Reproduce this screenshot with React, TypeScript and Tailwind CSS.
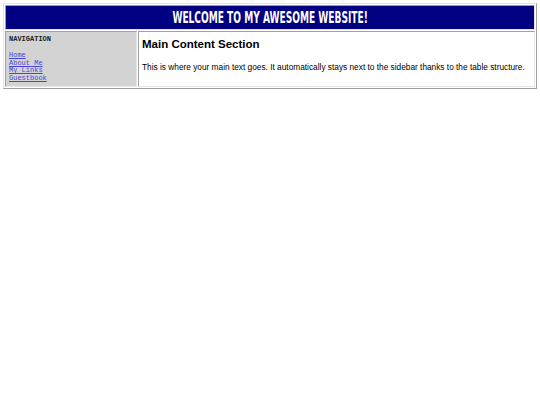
import React from "react";

const links = ["Home", "About Me", "My Links", "Guestbook"];

export default function App() {
  return (
    <div className="min-h-screen bg-white p-[3px]">
      <div className="flex flex-col gap-[1px] border border-t-[#e4e4e4] border-l-[#e4e4e4] border-r-[#a0a0a0] border-b-[#a0a0a0] p-[1px]">
        <div className="flex h-[25px] items-center justify-center overflow-hidden border border-t-[#a0a0a0] border-l-[#a0a0a0] border-r-[#e4e4e4] border-b-[#e4e4e4] bg-[#000080]">
          <h1
            className="scale-x-[0.63] whitespace-nowrap text-[16px] font-bold uppercase leading-none text-white"
            style={{ fontFamily: '"DejaVu Sans Condensed", "DejaVu Sans", sans-serif', fontStretch: "condensed" }}
          >
            Welcome to my Awesome Website!
          </h1>
        </div>
        <div className="flex gap-[1px]">
          <div className="w-[132px] shrink-0 border border-t-[#a0a0a0] border-l-[#a0a0a0] border-r-[#e4e4e4] border-b-[#e4e4e4] bg-[#d3d3d3] px-[3px] pt-[3px] pb-[3px] font-['Liberation_Mono',monospace]">
            <h3 className="text-[7px] font-bold leading-[9px] text-[#222]">NAVIGATION</h3>
            <ul className="mt-[8px] text-[7px] leading-[7.7px]">
              {links.map((l) => (
                <li key={l}>
                  <a href="#" className="text-[#4848d8] underline">
                    {l}
                  </a>
                </li>
              ))}
            </ul>
          </div>
          <div className="flex-1 border border-t-[#a0a0a0] border-l-[#a0a0a0] border-r-[#e4e4e4] border-b-[#e4e4e4] bg-white px-[3px] pt-[5px] font-['Comic_Sans_MS','Liberation_Sans',sans-serif]">
            <h2 className="text-[11.5px] font-bold leading-[14px] text-black">Main Content Section</h2>
            <p className="mt-[11px] text-[8.3px] leading-[10px] text-black">
              This is where your main text goes. It automatically stays next to the sidebar thanks to the table structure.
            </p>
          </div>
        </div>
      </div>
    </div>
  );
}
